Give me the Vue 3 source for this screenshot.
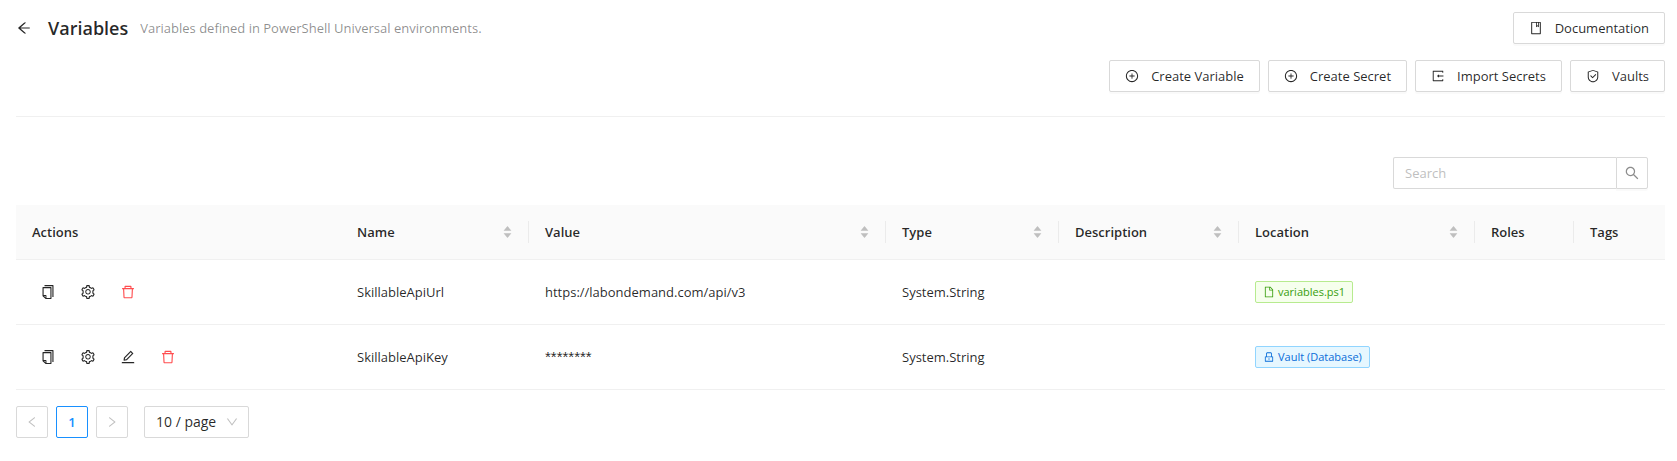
<template>
  <main class="page">
    <header class="pageHeader">
      <div class="heading">
        <button class="back" type="button" aria-label="Back">
          <svg class="icon" viewBox="0 0 1024 1024"><path :d="icons.arrowLeft" /></svg>
        </button>
        <h1 class="title">Variables</h1>
        <span class="subTitle">Variables defined in PowerShell Universal environments.</span>
      </div>
      <div class="extra">
        <div class="buttonRow" v-for="(row, i) in headerButtons" :key="i">
          <button class="btn" type="button" v-for="button in row" :key="button.label">
            <svg class="icon" viewBox="0 0 1024 1024"><path :d="icons[button.icon]" /></svg>
            <span>{{ button.label }}</span>
          </button>
        </div>
      </div>
    </header>

    <form class="search" role="search" @submit.prevent>
      <input class="searchInput" type="text" v-model="search" placeholder="Search" aria-label="Search" />
      <button class="searchButton" type="submit" aria-label="Search">
        <svg class="icon" viewBox="64 64 896 896"><path :d="icons.search" /></svg>
      </button>
    </form>

    <table class="table">
      <colgroup>
        <col v-for="column in columns" :key="column.title" :class="'col' + column.title" />
      </colgroup>
      <thead>
        <tr>
          <th v-for="column in columns" :key="column.title" scope="col">
            <div class="headCell">
              <span>{{ column.title }}</span>
              <button
                v-if="column.key"
                class="sorter"
                type="button"
                :aria-label="'Sort by ' + column.title"
                @click="sortBy(column.key)"
              >
                <svg class="caret" viewBox="0 0 1024 1024"><path :d="icons.caretUp" /></svg>
                <svg class="caret" viewBox="0 0 1024 1024"><path :d="icons.caretDown" /></svg>
              </button>
            </div>
          </th>
        </tr>
      </thead>
      <tbody>
        <tr v-for="row in rows" :key="row.name">
          <td>
            <div class="actions">
              <button
                v-for="action in row.actions"
                :key="action"
                class="action"
                :class="{ danger: action === 'delete' }"
                type="button"
                :aria-label="action"
              >
                <svg class="icon" viewBox="64 64 896 896"><path :d="icons[action]" /></svg>
              </button>
            </div>
          </td>
          <td>{{ row.name }}</td>
          <td :class="{ masked: row.secret }">{{ row.value }}</td>
          <td>{{ row.type }}</td>
          <td></td>
          <td>
            <span class="tag" :class="row.secret ? 'blue' : 'green'">
              <svg class="tagIcon" viewBox="0 0 1024 1024"><path :d="icons[row.secret ? 'lock' : 'file']" /></svg>
              <span>{{ row.location }}</span>
            </span>
          </td>
          <td></td>
          <td></td>
        </tr>
      </tbody>
    </table>

    <nav class="pagination" aria-label="Pagination">
      <button class="pageItem" type="button" disabled aria-label="Previous page">
        <svg class="pageIcon" viewBox="64 64 896 896"><path :d="icons.left" /></svg>
      </button>
      <button class="pageItem active" type="button" aria-current="page">1</button>
      <button class="pageItem" type="button" disabled aria-label="Next page">
        <svg class="pageIcon" viewBox="64 64 896 896"><path :d="icons.right" /></svg>
      </button>
      <div class="pageSize">
        <select class="pageSelect" v-model="pageSize" aria-label="Page size">
          <option v-for="size in [10, 20, 50, 100]" :key="size" :value="size">{{ size }} / page</option>
        </select>
        <svg class="pageIcon selectArrow" viewBox="64 64 896 896"><path :d="icons.down" /></svg>
      </div>
    </nav>
  </main>
</template>

<script setup>
import { computed, ref } from "vue";

const search = ref("");
const pageSize = ref(10);
const sortKey = ref("");

const headerButtons = [
  [{ icon: "book", label: "Documentation" }],
  [
    { icon: "plus", label: "Create Variable" },
    { icon: "plus", label: "Create Secret" },
    { icon: "import", label: "Import Secrets" },
    { icon: "safety", label: "Vaults" },
  ],
];

const columns = [
  { title: "Actions" },
  { title: "Name", key: "name" },
  { title: "Value", key: "value" },
  { title: "Type", key: "type" },
  { title: "Description", key: "description" },
  { title: "Location", key: "location" },
  { title: "Roles" },
  { title: "Tags" },
];

const variables = [
  {
    name: "SkillableApiUrl",
    value: "https://labondemand.com/api/v3",
    type: "System.String",
    description: "",
    location: "variables.ps1",
    secret: false,
    actions: ["copy", "settings", "delete"],
  },
  {
    name: "SkillableApiKey",
    value: "********",
    type: "System.String",
    description: "",
    location: "Vault (Database)",
    secret: true,
    actions: ["copy", "settings", "edit", "delete"],
  },
];

const rows = computed(() => {
  const found = variables.filter((v) => v.name.toLowerCase().includes(search.value.toLowerCase()));
  if (!sortKey.value) return found;
  return found.sort((a, b) => a[sortKey.value].localeCompare(b[sortKey.value]));
});

function sortBy(key) {
  sortKey.value = sortKey.value === key ? "" : key;
}

const icons = {
  arrowLeft:
    "M872 474H286.9l350.2-304c5.6-4.9 2.2-14-5.2-14h-88.5c-3.9 0-7.6 1.4-10.5 3.9L155 487.8a31.96 31.96 0 000 48.3L535.1 866c1.5 1.3 3.3 2 5.2 2h91.5c7.4 0 10.8-9.2 5.2-14L286.9 550H872c4.4 0 8-3.6 8-8v-60c0-4.4-3.6-8-8-8z",
  book:
    "M832 64H192c-17.7 0-32 14.3-32 32v832c0 17.7 14.3 32 32 32h640c17.7 0 32-14.3 32-32V96c0-17.7-14.3-32-32-32zm-260 72h96v209.9L621.5 312 572 347.4V136zm220 752H232V136h280v296.9c0 3.3 1 6.6 3 9.3a15.9 15.9 0 0022.3 3.7l83.8-59.9 81.4 59.4c2.7 2 6 3.1 9.4 3.1 8.8 0 16-7.2 16-16V136h64v752z",
  plus:
    "M696 480H544V328c0-4.4-3.6-8-8-8h-48c-4.4 0-8 3.6-8 8v152H328c-4.4 0-8 3.6-8 8v48c0 4.4 3.6 8 8 8h152v152c0 4.4 3.6 8 8 8h48c4.4 0 8-3.6 8-8V544h152c4.4 0 8-3.6 8-8v-48c0-4.4-3.6-8-8-8zM512 64C264.6 64 64 264.6 64 512s200.6 448 448 448 448-200.6 448-448S759.4 64 512 64zm0 820c-205.4 0-372-166.6-372-372s166.6-372 372-372 372 166.6 372 372-166.6 372-372 372z",
  import:
    "M888.3 757.4h-53.8c-4.2 0-7.7 3.5-7.7 7.7v61.8H197.1V197.1h629.8v61.8c0 4.2 3.5 7.7 7.7 7.7h53.8c4.2 0 7.7-3.4 7.7-7.7V158.7c0-17-13.7-30.7-30.7-30.7H158.7c-17 0-30.7 13.7-30.7 30.7v706.6c0 17 13.7 30.7 30.7 30.7h706.6c17 0 30.7-13.7 30.7-30.7V765.1c0-4.3-3.5-7.7-7.7-7.7zM902 476H588v-76c0-6.7-7.8-10.5-13-6.3l-141.9 112a8 8 0 000 12.6l141.9 112c5.3 4.2 13 .4 13-6.3v-76h314c4.4 0 8-3.6 8-8v-56c0-4.4-3.6-8-8-8z",
  safety:
    "M512 64L128 192v384c0 212.1 171.9 384 384 384s384-171.9 384-384V192L512 64zm312 512c0 172.3-139.7 312-312 312S200 748.3 200 576V246l312-110 312 110v330zM378.4 475.1a35.91 35.91 0 00-50.9 0 35.91 35.91 0 000 50.9l129.4 129.4 2.1 2.1a33.98 33.98 0 0048.1 0L730.6 434a33.98 33.98 0 000-48.1l-2.8-2.8a33.98 33.98 0 00-48.1 0L483 579.7 378.4 475.1z",
  search:
    "M909.6 854.5L649.9 594.8C690.2 542.7 712 479 712 412c0-80.2-31.3-155.4-87.9-212.1-56.6-56.7-132-87.9-212.1-87.9s-155.5 31.3-212.1 87.9C143.2 256.5 112 331.8 112 412c0 80.1 31.3 155.5 87.9 212.1C256.5 680.8 331.8 712 412 712c67 0 130.6-21.8 182.7-62l259.7 259.6a8.2 8.2 0 0011.6 0l43.6-43.5a8.2 8.2 0 000-11.6zM570.4 570.4C528 612.7 471.8 636 412 636s-116-23.3-158.4-65.6C211.3 528 188 471.8 188 412s23.3-116.1 65.6-158.4C296 211.3 352.2 188 412 188s116.1 23.2 158.4 65.6S636 352.2 636 412s-23.3 116.1-65.6 158.4z",
  copy:
    "M832 64H296c-4.4 0-8 3.6-8 8v56c0 4.4 3.6 8 8 8h496v688c0 4.4 3.6 8 8 8h56c4.4 0 8-3.6 8-8V96c0-17.7-14.3-32-32-32zM704 192H192c-17.7 0-32 14.3-32 32v530.7c0 8.5 3.4 16.6 9.4 22.6l173.3 173.3c2.2 2.2 4.7 4 7.4 5.5v1.9h4.2c3.5 1.3 7.2 2 11 2H704c17.7 0 32-14.3 32-32V224c0-17.7-14.3-32-32-32zM350 856.2L263.9 770H350v86.2zM664 888H414V746c0-22.1-17.9-40-40-40H232V264h432v624z",
  settings:
    "M924.8 625.7l-65.5-56c3.1-19 4.7-38.4 4.7-57.8s-1.6-38.8-4.7-57.8l65.5-56a32.03 32.03 0 009.3-35.2l-.9-2.6a443.74 443.74 0 00-79.7-137.9l-1.8-2.1a32.12 32.12 0 00-35.1-9.5l-81.3 28.9c-30-24.6-63.5-44-99.7-57.6l-15.7-85a32.05 32.05 0 00-25.8-25.7l-2.7-.5c-52.1-9.4-106.9-9.4-159 0l-2.7.5a32.05 32.05 0 00-25.8 25.7l-15.8 85.4a351.86 351.86 0 00-99 57.4l-81.9-29.1a32 32 0 00-35.1 9.5l-1.8 2.1a446.02 446.02 0 00-79.7 137.9l-.9 2.6c-4.5 12.5-.8 26.5 9.3 35.2l66.3 56.6c-3.1 18.8-4.6 38-4.6 57.1 0 19.2 1.5 38.4 4.6 57.1L99 625.5a32.03 32.03 0 00-9.3 35.2l.9 2.6c18.1 50.4 44.9 96.9 79.7 137.9l1.8 2.1a32.12 32.12 0 0035.1 9.5l81.9-29.1c29.8 24.5 63.1 43.9 99 57.4l15.8 85.4a32.05 32.05 0 0025.8 25.7l2.7.5a449.4 449.4 0 00159 0l2.7-.5a32.05 32.05 0 0025.8-25.7l15.7-85a350 350 0 0099.7-57.6l81.3 28.9a32 32 0 0035.1-9.5l1.8-2.1c34.8-41.1 61.6-87.5 79.7-137.9l.9-2.6c4.5-12.3.8-26.3-9.3-35zM788.3 465.9c2.5 15.1 3.8 30.6 3.8 46.1s-1.3 31-3.8 46.1l-6.6 40.1 74.7 63.9a370.03 370.03 0 01-42.6 73.6L721 702.8l-31.4 25.8c-23.9 19.6-50.5 35-79.3 45.8l-38.1 14.3-17.9 97a377.5 377.5 0 01-85 0l-17.9-97.2-37.8-14.5c-28.5-10.8-55-26.2-78.7-45.7l-31.4-25.9-93.4 33.2c-17-22.9-31.2-47.6-42.6-73.6l75.5-64.5-6.5-40c-2.4-14.9-3.7-30.3-3.7-45.5 0-15.3 1.2-30.6 3.7-45.5l6.5-40-75.5-64.5c11.3-26.1 25.6-50.7 42.6-73.6l93.4 33.2 31.4-25.9c23.7-19.5 50.2-34.9 78.7-45.7l37.9-14.3 17.9-97.2c28.1-3.2 56.8-3.2 85 0l17.9 97 38.1 14.3c28.7 10.8 55.4 26.2 79.3 45.8l31.4 25.8 92.8-32.9c17 22.9 31.2 47.6 42.6 73.6L781.8 426l6.5 39.9zM512 326c-97.2 0-176 78.8-176 176s78.8 176 176 176 176-78.8 176-176-78.8-176-176-176zm79.2 255.2A111.6 111.6 0 01512 614c-29.9 0-58-11.7-79.2-32.8A111.6 111.6 0 01400 502c0-29.9 11.7-58 32.8-79.2C454 401.6 482.1 390 512 390c29.9 0 58 11.6 79.2 32.8A111.6 111.6 0 01624 502c0 29.9-11.7 58-32.8 79.2z",
  edit:
    "M257.7 752c2 0 4-.2 6-.5L431.9 722c2-.4 3.9-1.3 5.3-2.8l423.9-423.9a9.96 9.96 0 000-14.1L694.9 114.9c-1.9-1.9-4.4-2.9-7.1-2.9s-5.2 1-7.1 2.9L256.8 538.8c-1.5 1.5-2.4 3.3-2.8 5.3l-29.5 168.2a33.5 33.5 0 009.4 29.8c6.6 6.4 14.9 9.9 23.8 9.9zm67.4-174.4L687.8 215l73.3 73.3-362.7 362.6-88.9 15.7 15.6-89zM880 836H144c-17.7 0-32 14.3-32 32v36c0 4.4 3.6 8 8 8h784c4.4 0 8-3.6 8-8v-36c0-17.7-14.3-32-32-32z",
  delete:
    "M360 184h-8c4.4 0 8-3.6 8-8v8h304v-8c0 4.4 3.6 8 8 8h-8v72h72v-80c0-35.3-28.7-64-64-64H352c-35.3 0-64 28.7-64 64v80h72v-72zm504 72H160c-17.7 0-32 14.3-32 32v32c0 4.4 3.6 8 8 8h60.4l24.7 523c1.6 34.1 29.8 61 63.9 61h454c34.2 0 62.3-26.8 63.9-61l24.7-523H888c4.4 0 8-3.6 8-8v-32c0-17.7-14.3-32-32-32zM731.3 840H292.7l-24.2-512h487l-24.2 512z",
  file:
    "M854.6 288.6L639.4 73.4c-6-6-14.1-9.4-22.6-9.4H192c-17.7 0-32 14.3-32 32v832c0 17.7 14.3 32 32 32h640c17.7 0 32-14.3 32-32V311.3c0-8.5-3.4-16.7-9.4-22.7zM790.2 326H602V137.8L790.2 326zm1.8 562H232V136h302v216a42 42 0 0042 42h216v494z",
  lock:
    "M832 464h-68V240c0-70.7-57.3-128-128-128H388c-70.7 0-128 57.3-128 128v224h-68c-17.7 0-32 14.3-32 32v384c0 17.7 14.3 32 32 32h640c17.7 0 32-14.3 32-32V496c0-17.7-14.3-32-32-32zM332 240c0-30.9 25.1-56 56-56h248c30.9 0 56 25.1 56 56v224H332V240zm460 600H232V536h560v304zM484 701v53c0 4.4 3.6 8 8 8h40c4.4 0 8-3.6 8-8v-53a48.01 48.01 0 10-56 0z",
  left:
    "M724 218.3V141c0-6.7-7.7-10.4-12.9-6.3L260.3 486.8a31.86 31.86 0 000 50.3l450.8 352.1c5.3 4.1 12.9.4 12.9-6.3v-77.3c0-4.9-2.3-9.6-6.1-12.6l-360-281 360-281.1c3.8-3 6.1-7.7 6.1-12.6z",
  right:
    "M765.7 486.8L314.9 134.7A7.97 7.97 0 00302 141v77.3c0 4.9 2.3 9.6 6.1 12.6l360 281.1-360 281.1c-3.9 3-6.1 7.7-6.1 12.6V883c0 6.7 7.7 10.4 12.9 6.3l450.8-352.1a31.96 31.96 0 000-50.4z",
  down:
    "M884 256h-75c-5.1 0-9.9 2.5-12.9 6.6L512 654.2 227.9 262.6c-3-4.1-7.8-6.6-12.9-6.6h-75c-6.5 0-10.3 7.4-6.5 12.7l352.6 486.1c12.8 17.6 39 17.6 51.7 0l352.6-486.1c3.9-5.3.1-12.7-6.4-12.7z",
  caretUp:
    "M858.9 689L530.5 308.2c-9.4-10.9-27.5-10.9-37 0L165.1 689c-12.2 14.2-1.2 35 18.5 35h656.8c19.7 0 30.7-20.8 18.5-35z",
  caretDown:
    "M840.4 300H183.6c-19.7 0-30.7 20.8-18.5 35l328.4 380.8c9.4 10.9 27.5 10.9 37 0L858.9 335c12.2-14.2 1.2-35-18.5-35z",
};
</script>

<style>
body {
  background: #fff;
}
</style>

<style scoped>
.page {
  padding: 12px 12px 16px 16px;
  color: rgba(0, 0, 0, 0.85);
  font-family: "Open Sans", "Noto Sans", sans-serif;
  font-size: 13px;
  line-height: 22px;
}
.page *,
.page *::before {
  box-sizing: border-box;
}
button,
input,
select {
  margin: 0;
  font: inherit;
  color: inherit;
}
button {
  display: flex;
  align-items: center;
  justify-content: center;
  padding: 0;
  border: 0;
  background: none;
  cursor: pointer;
}
svg {
  display: block;
  flex: none;
  fill: currentColor;
}
.icon {
  width: 14px;
  height: 14px;
}

/* header */
.pageHeader {
  display: flex;
  justify-content: space-between;
  align-items: flex-start;
  padding-bottom: 24px;
  border-bottom: 1px solid #f0f0f0;
}
.heading {
  display: flex;
  align-items: center;
  height: 32px;
}
.back {
  margin-right: 16px;
}
.back .icon {
  width: 16px;
  height: 16px;
}
.title {
  margin: 0 12px 0 0;
  font-size: 18px;
  font-weight: 600;
  line-height: 32px;
}
.subTitle {
  color: rgba(0, 0, 0, 0.45);
}
.extra {
  display: flex;
  flex-direction: column;
  align-items: flex-end;
  gap: 16px;
}
.buttonRow {
  display: flex;
  gap: 8px;
}
.btn {
  gap: 12px;
  height: 32px;
  padding: 0 15px;
  border: 1px solid #d9d9d9;
  border-radius: 2px;
  background: #fff;
  box-shadow: 0 2px 0 rgba(0, 0, 0, 0.02);
  white-space: nowrap;
}

/* search */
.search {
  display: flex;
  width: 255px;
  margin: 40px 17px 16px auto;
}
.searchInput {
  flex: 1;
  min-width: 0;
  height: 32px;
  padding: 0 11px;
  border: 1px solid #d9d9d9;
  border-right: 0;
  border-radius: 2px 0 0 2px;
  outline: none;
}
.searchInput::placeholder {
  color: #bfbfbf;
}
.searchButton {
  width: 32px;
  height: 32px;
  border: 1px solid #d9d9d9;
  border-radius: 0 2px 2px 0;
  box-shadow: 0 2px 0 rgba(0, 0, 0, 0.02);
  color: rgba(0, 0, 0, 0.45);
}

/* table */
.table {
  width: 100%;
  table-layout: fixed;
  border-collapse: separate;
  border-spacing: 0;
}
.colActions {
  width: 325px;
}
.colName {
  width: 188px;
}
.colValue {
  width: 357px;
}
.colType {
  width: 173px;
}
.colDescription {
  width: 180px;
}
.colLocation {
  width: 236px;
}
.colRoles {
  width: 99px;
}
.colTags {
  width: 91px;
}
th,
td {
  padding: 16px;
  border-bottom: 1px solid #f0f0f0;
  text-align: left;
}
th {
  position: relative;
  background: #fafafa;
  font-weight: 600;
}
th:not(:first-child):not(:last-child)::before {
  content: "";
  position: absolute;
  top: 16px;
  right: 0;
  width: 1px;
  height: 22px;
  background: rgba(0, 0, 0, 0.06);
}
.headCell {
  display: flex;
  align-items: center;
  justify-content: space-between;
}
.sorter {
  flex-direction: column;
  color: #bfbfbf;
}
.caret {
  width: 11px;
  height: 11px;
}
.caret + .caret {
  margin-top: -4px;
}
.masked {
  font-family: "Liberation Sans", sans-serif;
  font-size: 15px;
}
.actions {
  display: flex;
  gap: 8px;
}
.action {
  width: 32px;
  height: 32px;
}
.danger {
  color: #ff4d4f;
}
.tag {
  display: flex;
  align-items: center;
  gap: 3px;
  width: fit-content;
  padding: 0 7px;
  border: 1px solid;
  border-radius: 2px;
  font-size: 11px;
  line-height: 20px;
}
.tagIcon {
  width: 12px;
  height: 12px;
}
.green {
  color: #389e0d;
  background: #f6ffed;
  border-color: #b7eb8f;
}
.blue {
  color: #096dd9;
  background: #e6f7ff;
  border-color: #91d5ff;
}

/* pagination */
.pagination {
  display: flex;
  gap: 8px;
  margin-top: 16px;
}
.pageItem {
  width: 32px;
  height: 32px;
  border: 1px solid #d9d9d9;
  border-radius: 2px;
  background: #fff;
}
.pageItem:disabled {
  color: rgba(0, 0, 0, 0.25);
  cursor: not-allowed;
}
.active {
  border-color: #1890ff;
  color: #1890ff;
  font-weight: 600;
}
.pageIcon {
  width: 12px;
  height: 12px;
}
.pageSize {
  position: relative;
  margin-left: 8px;
}
.pageSelect {
  display: block;
  width: 105px;
  height: 32px;
  padding: 0 24px 0 11px;
  border: 1px solid #d9d9d9;
  border-radius: 2px;
  background: #fff;
  font-size: 14px;
  appearance: none;
}
.selectArrow {
  position: absolute;
  top: 10px;
  right: 11px;
  color: rgba(0, 0, 0, 0.25);
  pointer-events: none;
}
</style>
